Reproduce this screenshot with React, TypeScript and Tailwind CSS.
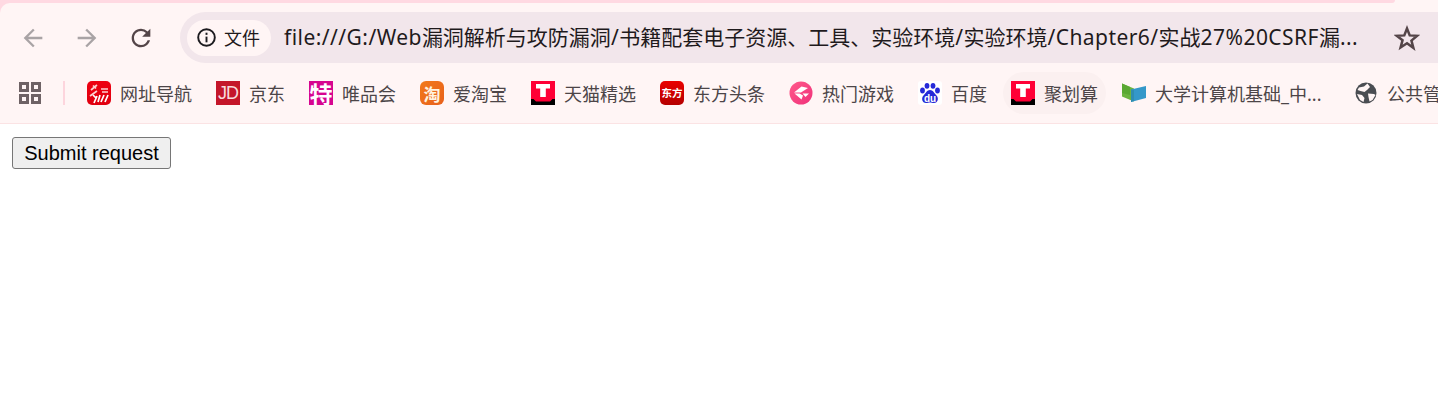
import React from "react";

const font = "[font-family:'Noto_Sans','Noto_Sans_CJK_SC',sans-serif]";

function Logo({ kind }: { kind: string }) {
  switch (kind) {
    case "nav":
      return (
        <div className="w-6 h-6 rounded-[5px] bg-gradient-to-b from-[#ee0011] to-[#e00010] overflow-hidden">
          <svg viewBox="0 0 24 24" className="w-6 h-6" fill="none" stroke="#fbd0d0" strokeWidth="1.700">
            <path d="M4 9l6-5M6 4.500l3 3M3 15l7-5M14 8h7M15 11h6" />
            <path d="M7 22l3-7M11 21l2-7M14 21l3-7M18 21l3-7M6 14l3 3" stroke="#fff" />
          </svg>
        </div>
      );
    case "jd":
      return (
        <div className="w-6 h-6 bg-[#c4162a] flex items-center justify-center text-[#f7d9dc] text-[18px] font-medium leading-none tracking-[-1px] [font-family:'Liberation_Sans',sans-serif]">
          JD
        </div>
      );
    case "te":
      return (
        <div className="w-6 h-6 bg-[#d6058f] flex items-center justify-center text-white text-[23px] font-bold leading-none overflow-hidden [font-family:'Noto_Sans_CJK_SC',sans-serif]">
          特
        </div>
      );
    case "tao":
      return (
        <div className="w-6 h-6 rounded-[6px] bg-gradient-to-br from-[#f27a1a] to-[#e8601c] flex items-center justify-center text-[#fff3e0] text-[17px] font-bold leading-none [font-family:'Noto_Sans_CJK_SC',sans-serif]">
          淘
        </div>
      );
    case "tmall":
      return (
        <svg viewBox="0 0 24 24" className="w-6 h-6 block">
          <rect width="24" height="24" fill="#000" />
          <path d="M0 0h24v18h-2.500l-2.500 2.500H5L2.500 18H0z" fill="#ff0036" />
          <path d="M5 3h14v4.500h-4.200V16H9.200V7.500H5z" fill="#fff" />
        </svg>
      );
    case "df":
      return (
        <div className="w-6 h-6 rounded-[5px] bg-gradient-to-b from-[#ea0000] to-[#b50000] flex items-center justify-center text-white text-[10.500px] font-bold leading-none whitespace-nowrap [font-family:'Noto_Sans_CJK_SC',sans-serif]">
          东方
        </div>
      );
    case "game":
      return (
        <svg viewBox="0 0 24 24" className="w-6 h-6 block">
          <defs>
            <linearGradient id="gm" x1="0" y1="0" x2="1" y2="1">
              <stop offset="0" stopColor="#ff5a8a" />
              <stop offset="1" stopColor="#f0307a" />
            </linearGradient>
          </defs>
          <circle cx="12" cy="12" r="11.500" fill="url(#gm)" />
          <path d="M5 11.500L12.500 5.500 19 7 12 11.500z" fill="#fff" />
          <path d="M5.500 12.500L12.500 18.500 14 14.500 10.500 12.500z" fill="#fff" />
          <path d="M13.500 12.500H20L16.500 16z" fill="#fff" />
        </svg>
      );
    case "baidu":
      return (
        <div className="relative w-6 h-6 bg-white rounded-[3px]">
          <svg viewBox="0 0 24 24" className="w-6 h-6 block" fill="#2529d8">
            <ellipse cx="4.500" cy="9.500" rx="2.400" ry="2.900" />
            <ellipse cx="9" cy="4.800" rx="2.400" ry="2.900" />
            <ellipse cx="15" cy="4.800" rx="2.400" ry="2.900" />
            <ellipse cx="19.500" cy="9.500" rx="2.400" ry="2.900" />
            <path d="M12 9c-3 0-4 3-6.500 5.500C3 17 4 22 8 22c1.500 0 2.800-.6 4-.6s2.500.6 4 .6c4 0 5-5 2.500-7.500C16 12 15 9 12 9z" />
          </svg>
          <span className="absolute left-0 right-0 top-[12.500px] text-center text-white text-[10px] font-bold leading-none [font-family:'Liberation_Sans',sans-serif]">
            du
          </span>
        </div>
      );
    case "course":
      return (
        <svg viewBox="0 0 24 24" className="w-6 h-6 block">
          <path d="M0 2.500l12 5v13l-12-5z" fill="#6cb33f" />
          <path d="M0 2.500l8 3.500v8l-8-2z" fill="#5aa832" />
          <path d="M9 8.500l15-3.500v12l-15 4z" fill="#3498c9" />
          <path d="M9 8.500l3 .5v11l-3 1z" fill="#2f8db0" />
        </svg>
      );
    case "globe":
      return (
        <svg viewBox="0 0 24 24" className="w-6 h-6 block">
          <circle cx="12" cy="12" r="10.500" fill="#4a4d52" />
          <path d="M5 6.500l5-1 3.500-3 2.500 3.500-3 3-2.500 2-4-1-3-1zM14 12.500l6 .5 1.500 1-3 5-3 1.500-1-4.500zM3 13l5 1 2.500 3-1 4-3.500-2z" fill="#fff5f5" />
        </svg>
      );
    default:
      return null;
  }
}

const items: { kind: string; label: string; hover?: boolean; wide?: boolean }[] = [
  { kind: "nav", label: "网址导航" },
  { kind: "jd", label: "京东" },
  { kind: "te", label: "唯品会" },
  { kind: "tao", label: "爱淘宝" },
  { kind: "tmall", label: "天猫精选" },
  { kind: "df", label: "东方头条" },
  { kind: "game", label: "热门游戏" },
  { kind: "baidu", label: "百度" },
  { kind: "tmall", label: "聚划算", hover: true },
  { kind: "course", label: "大学计算机基础_中...", wide: true },
  { kind: "globe", label: "公共管" },
];

function L({ children }: { children: React.ReactNode }) {
  return <span className="tracking-[0.45px]">{children}</span>;
}

export default function App() {
  return (
    <div className={`w-[1438px] h-[411px] bg-white overflow-hidden ${font}`}>
      <div className="bg-[#ffd9e2]">
        <div className="h-[3px] w-full bg-[#fff5f5]">
          <div className="h-[3px] w-[1395px] bg-[#ffd9e2] rounded-br-[6px]" />
        </div>
        <header className="h-[121px] bg-[#fff5f5] border-b border-[#fbe3e4] rounded-tl-[10px] flex flex-col">
          <div className="h-[69px] flex items-center py-[8px]">
            <div className="w-[180px] shrink-0 flex items-center pl-[19px]">
              <svg viewBox="0 0 24 24" className="w-[28px] h-[28px]" fill="#a9a3a5">
                <path d="M20 11H7.830l5.590-5.590L12 4l-8 8 8 8 1.410-1.410L7.830 13H20v-2z" />
              </svg>
              <svg viewBox="0 0 24 24" className="w-[28px] h-[28px] ml-[26px]" fill="#a9a3a5">
                <path d="M4 11h12.170l-5.590-5.590L12 4l8 8-8 8-1.410-1.410L16.170 13H4v-2z" />
              </svg>
              <svg viewBox="0 0 24 24" className="w-[28px] h-[28px] ml-[26px]" fill="#544548">
                <path d="M17.650 6.350A7.958 7.958 0 0 0 12 4c-4.420 0-7.990 3.580-7.990 8s3.570 8 7.990 8c3.730 0 6.840-2.550 7.730-6h-2.080A5.990 5.990 0 0 1 12 18c-3.310 0-6-2.690-6-6s2.690-6 6-6c1.660 0 3.140.69 4.220 1.780L13 11h7V4l-2.350 2.350z" />
              </svg>
            </div>
            <div className="flex-1 h-[51px] rounded-l-full rounded-r-[26px] bg-[#f2e6eb] flex items-center pl-[7px]">
              <div className="h-[36px] w-[84px] shrink-0 rounded-full bg-[#fff5f5] flex items-center pl-[9px]">
                <svg viewBox="0 0 24 24" className="w-[21px] h-[21px]" fill="none" stroke="#1c1b1f" strokeWidth="2.200">
                  <circle cx="12" cy="12" r="9.500" />
                  <path d="M12 11v6.500" />
                  <path d="M12 6.500v2.500" />
                </svg>
                <span className="ml-[7px] text-[18px] leading-none text-[#1f1a1c]">文件</span>
              </div>
              <div className="ml-[13px] w-[1090px] shrink-0 text-[21px] leading-none text-[#1f1a1c] whitespace-nowrap">
                <L>file:///G:/Web</L>漏洞解析与攻防漏洞<L>/</L>书籍配套电子资源、工具、实验环境<L>/</L>实验环境<L>/Chapter6/</L>实战<L>27%20CSRF</L>漏<L>...</L>
              </div>
              <svg viewBox="0 0 24 24" className="w-[26px] h-[26px] ml-[20px] shrink-0" fill="none" stroke="#544548" strokeWidth="2.300" strokeLinejoin="miter">
                <path d="M12 3.200l2.500 6.400 6.900.4-5.300 4.400 1.800 6.700L12 16.900l-5.900 3.800 1.800-6.700L2.600 10l6.900-.4z" />
              </svg>
            </div>
          </div>
          <nav className="h-[51px] flex items-start">
            <div className="flex items-center h-[42px] pl-[19px] shrink-0">
              <div className="grid grid-cols-2 gap-[2px] w-[22px]">
                <div className="w-[10px] h-[10px] border-[3px] border-[#6e6265]" />
                <div className="w-[10px] h-[10px] border-[3px] border-[#6e6265]" />
                <div className="w-[10px] h-[10px] border-[3px] border-[#6e6265]" />
                <div className="w-[10px] h-[10px] border-[3px] border-[#6e6265]" />
              </div>
              <div className="w-[2px] h-[24px] bg-[#fdd5dd] ml-[22px] mr-[14px]" />
            </div>
            <div className="flex gap-2 whitespace-nowrap">
              {items.map((it, i) => (
                <div
                  key={i}
                  className={`h-[42px] px-2 flex items-center gap-[9px] rounded-full shrink-0 ${it.hover ? "bg-[#fbf0f0]" : ""}`}
                >
                  <Logo kind={it.kind} />
                  <span className={`text-[18px] leading-none pt-[1px] text-[#4c4548] ${it.wide ? "w-[175px]" : ""}`}>{it.label}</span>
                </div>
              ))}
            </div>
          </nav>
        </header>
      </div>
      <div className="pt-[13px] pl-[12px]">
        <button className="h-[32px] w-[159px] bg-[#efefef] border border-[#767676] rounded-[3px] text-[20px] leading-none text-black [font-family:'Liberation_Sans',sans-serif]">
          Submit request
        </button>
      </div>
    </div>
  );
}
